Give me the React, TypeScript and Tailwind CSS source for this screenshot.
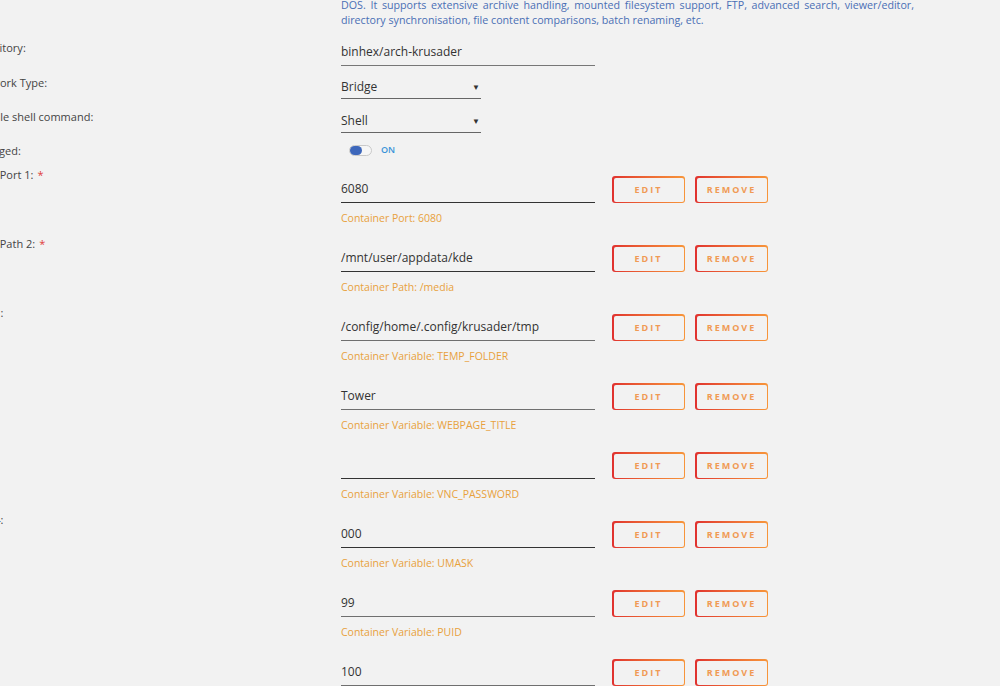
import { ReactNode } from "react"

type PortRow = {
  label: string
  required?: boolean
  value: string
  caption?: string
  dark?: boolean
}

const rows: PortRow[] = [
  { label: "Host Port 1:", required: true, value: "6080", caption: "Container Port: 6080", dark: true },
  { label: "Host Path 2:", required: true, value: "/mnt/user/appdata/kde", caption: "Container Path: /media", dark: true },
  { label: "Key 1:", value: "/config/home/.config/krusader/tmp", caption: "Container Variable: TEMP_FOLDER" },
  { label: "", value: "Tower", caption: "Container Variable: WEBPAGE_TITLE" },
  { label: "", value: "", caption: "Container Variable: VNC_PASSWORD", dark: true },
  { label: "Key 4:", value: "000", caption: "Container Variable: UMASK", dark: true },
  { label: "", value: "99", caption: "Container Variable: PUID" },
  { label: "", value: "100" },
]

const Label = ({ children, className = "pl-[4px]" }: { children: ReactNode; className?: string }) => (
  <div className={`w-[377px] shrink-0 whitespace-nowrap text-[11px] leading-4 text-[#444] ${className}`}>
    {children}
  </div>
)

const OutlineButton = ({ text }: { text: string }) => (
  <div className="h-[27px] w-[73px] rounded-[3px] bg-gradient-to-r from-[#e0312f] to-[#f7953a] p-[1.5px]">
    <div className="flex h-full w-full items-center justify-center rounded-[2px] bg-[#f2f2f2] text-[9px] font-bold tracking-[2px] text-[#f09a55]">
      {text}
    </div>
  </div>
)

const Select = ({ value }: { value: string }) => (
  <div className="flex w-[140px] items-center justify-between border-b border-[#666] py-[3px] pr-[1px] text-[12px] leading-4 text-[#333]">
    <span>{value}</span>
    <span className="text-[8px]">▼</span>
  </div>
)

export default function App() {
  return (
    <div
      className="flex h-[686px] w-[1000px] flex-col overflow-hidden bg-[#f2f2f2]"
      style={{ fontFamily: '"Open Sans", "Liberation Sans", sans-serif' }}
    >
      <div className="-ml-[36px] flex-1">
        {/* description */}
        <div className="-mt-[2px] flex">
          <Label>{""}</Label>
          <div className="w-[573px] text-[10.7px] leading-[15px] text-[#4a6fb5]">
            <p className="[text-align-last:justify]">
              DOS. It supports extensive archive handling, mounted filesystem support, FTP, advanced search, viewer/editor,
            </p>
            <p>directory synchronisation, file content comparisons, batch renaming, etc.</p>
          </div>
        </div>

        {/* repository */}
        <div className="mt-[11px] flex">
          <Label className="mt-[1px] pl-[4px]">Repository:</Label>
          <div className="w-[254px] border-b border-[#777] py-[5px] text-[12px] leading-4 text-[#333]">
            binhex/arch-krusader
          </div>
        </div>

        <div className="mt-[10px] flex">
          <Label className="-mt-[1px] pl-[9px]">Network Type:</Label>
          <Select value="Bridge" />
        </div>

        <div className="mt-[11px] flex">
          <Label className="-mt-[1px] pl-[4px]">Console shell command:</Label>
          <Select value="Shell" />
        </div>

        <div className="mt-[9px] flex h-[16px] items-center">
          <Label className="pt-[2px] pl-[4px]">Privileged:</Label>
          <div className="ml-[8px] flex items-center gap-[9px]">
            <div className="flex h-[11px] w-[23px] items-center rounded-full border border-[#c9c9c9] bg-[#f6f6f6]">
              <div className="h-full w-[12px] rounded-full bg-[#3d67bb]" />
            </div>
            <span className="text-[9px] font-semibold text-[#3a92d8]">ON</span>
          </div>
        </div>

        {/* ports, paths and variables */}
        <div className="mt-[9px]">
          {rows.map((row, i) => (
            <div key={i} className="flex h-[69px]">
              <Label className="pl-[9px]">
                {row.label}
                {row.required && <span className="ml-1 text-[#e0403a]">*</span>}
              </Label>
              <div className="mt-[9px]">
                <div className="flex items-start">
                  <div
                    className={`h-[27px] w-[254px] border-b py-[5px] text-[12px] leading-4 text-[#333] ${
                      row.dark ? "border-[#333]" : "border-[#6f6f6f]"
                    }`}
                  >
                    {row.value}
                  </div>
                  <div className="ml-[17px] flex gap-[10px]">
                    <OutlineButton text="EDIT" />
                    <OutlineButton text="REMOVE" />
                  </div>
                </div>
                {row.caption && (
                  <div className="mt-[7px] text-[10.5px] leading-4 text-[#e8a13c]">{row.caption}</div>
                )}
              </div>
            </div>
          ))}
        </div>
      </div>
      <div className="h-[3px] shrink-0 border-t border-[#d0d0d0] bg-[#e4e4e4]" />
    </div>
  )
}
